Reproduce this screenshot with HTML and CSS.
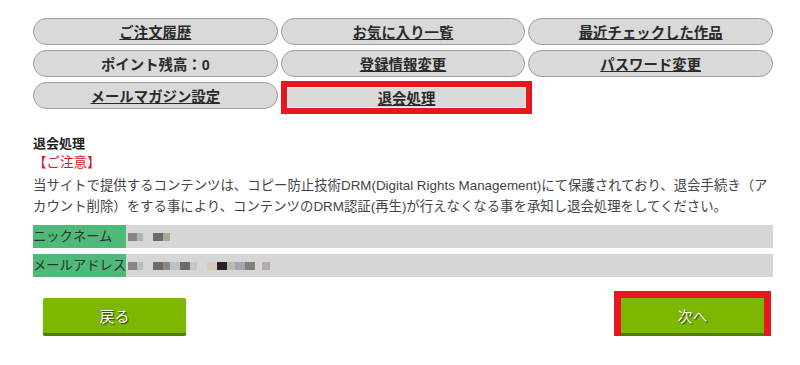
FILE: index.html
```html
<!DOCTYPE html>
<html lang="ja">
<head>
  <meta charset="UTF-8">
  <meta name="viewport" content="width=device-width, initial-scale=1.0">
  <title>退会処理</title>
  <link rel="stylesheet" href="styles.css">
</head>
<body>

  <div class="page">
    <!-- Account Menu -->
    <nav class="account-nav">
      <a class="nav-btn" href="#">ご注文履歴</a>
      <a class="nav-btn" href="#">お気に入り一覧</a>
      <a class="nav-btn" href="#">最近チェックした作品</a>
      <span class="nav-btn plain">ポイント残高：0</span>
      <a class="nav-btn" href="#">登録情報変更</a>
      <a class="nav-btn" href="#">パスワード変更</a>
      <a class="nav-btn" href="#">メールマガジン設定</a>
      <a class="nav-btn current" href="#">退会処理</a>
    </nav>

    <!-- Notice -->
    <section class="notice">
      <h2>退会処理</h2>
      <div class="caution">【ご注意】</div>
      <p>当サイトで提供するコンテンツは、コピー防止技術DRM(Digital Rights Management)にて保護されており、退会手続き（ア<br>カウント削除）をする事により、コンテンツのDRM認証(再生)が行えなくなる事を承知し退会処理をしてください。</p>
    </section>

    <!-- Account Info -->
    <div class="fields">
      <div class="field-row">
        <div class="field-label">ニックネーム</div>
        <div class="field-value">
          <span class="mz w9 c1"></span><span class="mz w6 c2"></span>
          <span class="mz w10 c3 gap"></span><span class="mz w7 c4"></span>
        </div>
      </div>
      <div class="field-row">
        <div class="field-label">メールアドレス</div>
        <div class="field-value">
          <span class="mz w9 c1"></span><span class="mz w6 c5"></span>
          <span class="mz w10 c3 gap"></span><span class="mz w7 c6"></span><span class="mz w10 c7"></span><span class="mz w10 c8"></span><span class="mz w7 c9"></span>
          <span class="mz w10 c10 gap"></span><span class="mz w10 c11"></span><span class="mz w8 c12"></span><span class="mz w10 c13"></span><span class="mz w10 c14"></span>
          <span class="mz w8 c15 gap-s"></span>
        </div>
      </div>
    </div>

    <!-- Actions -->
    <div class="actions">
      <button type="button" class="green-btn">戻る</button>
      <button type="button" class="green-btn marked">次へ</button>
    </div>
  </div>

</body>
</html>
```

FILE: styles.css
```css
/* General Reset */
* {
  margin: 0;
  padding: 0;
  box-sizing: border-box;
}

body {
  font-family: "Liberation Sans", "Noto Sans CJK JP", sans-serif;
  color: #333;
  background: #fff;
}

.page {
  width: 800px;
  padding: 18px 27px 0 33px;
}

/* Account Menu */
.account-nav {
  display: grid;
  grid-template-columns: repeat(3, 1fr);
  grid-auto-rows: 27px;
  column-gap: 3px;
  row-gap: 5px;
}

.nav-btn {
  display: flex;
  align-items: center;
  justify-content: center;
  background: #d9d9d9;
  border: 1px solid #9c9c9c;
  border-radius: 14px;
  color: #2a2a2a;
  font-size: 14.4px;
  font-weight: bold;
  text-decoration: underline;
}

.nav-btn.plain {
  text-decoration: none;
}

.nav-btn.current {
  border-radius: 0;
  border-color: #ececec;
  height: 21px;
  margin: 5px -1px 0 6px;
  outline: 6px solid #e8161e;
}

/* Notice */
.notice {
  margin-top: 25px;
}

.notice h2 {
  font-size: 13px;
  font-weight: bold;
  line-height: 19px;
  color: #222;
}

.caution {
  font-size: 13.5px;
  line-height: 19px;
  color: #d8141b;
}

.notice p {
  margin: 3px -27px 0 0;
  font-size: 13.4px;
  line-height: 21px;
  color: #444;
  white-space: nowrap;
}

/* Account Info */
.fields {
  margin-top: 8px;
  display: flex;
  flex-direction: column;
  gap: 6px;
}

.field-row {
  display: flex;
  height: 23px;
  background: #d6d6d6;
}

.field-label {
  width: 93px;
  background: #4fb97a;
  font-size: 13.3px;
  line-height: 23px;
  color: #2a342e;
  white-space: nowrap;
}

.field-value {
  display: flex;
  align-items: center;
  padding-left: 2px;
}

.mz {
  display: block;
  height: 8px;
}

.mz.gap { margin-left: 10px; }
.mz.gap-s { margin-left: 7px; }

.w6 { width: 6px; }
.w7 { width: 7px; }
.w8 { width: 8px; }
.w9 { width: 9px; }
.w10 { width: 10px; }

.c1 { background: #8c8484; }
.c2 { background: #aab6bc; }
.c3 { background: #6e6a66; }
.c4 { background: #aca894; }
.c5 { background: #b4bec4; }
.c6 { background: #8e8678; }
.c7 { background: #b8c2ca; }
.c8 { background: #6c6a64; }
.c9 { background: #cac4c2; }
.c10 { background: #dacab6; }
.c11 { background: #2a2228; }
.c12 { background: #bcbcac; }
.c13 { background: #a2a6b2; }
.c14 { background: #827e7c; }
.c15 { background: #baaaaa; }

/* Actions */
.actions {
  margin-top: 21px;
  padding: 0 9px 0 10px;
  display: flex;
  justify-content: space-between;
}

.green-btn {
  width: 143px;
  height: 38px;
  background: #7cb800;
  border: none;
  border-bottom: 3px solid #4e7d00;
  border-radius: 2px;
  box-shadow: 0 1px 2px rgba(0, 0, 0, 0.25);
  color: #f6f6ea;
  font-family: "Liberation Sans", "Noto Sans CJK JP", sans-serif;
  font-size: 15px;
  text-shadow: 1px 1px 1px #2f3a10;
  cursor: pointer;
}

.green-btn.marked {
  border-radius: 0;
  outline: 7px solid #e8161e;
}
```
